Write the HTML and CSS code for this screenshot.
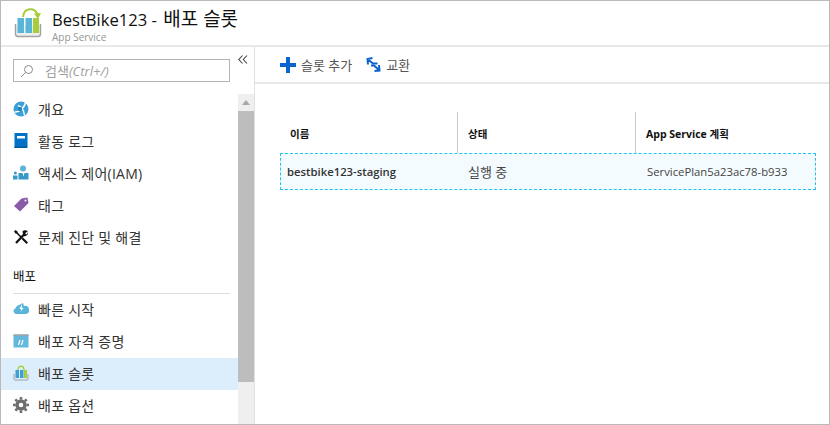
FILE: index.html
```html
<!DOCTYPE html>
<html lang="ko">
<head>
<meta charset="UTF-8" />
<title>BestBike123 - 배포 슬롯</title>
<link rel="stylesheet" href="styles.css">
</head>
<body>
<div class="window">
  <header class="blade-header">
    <svg class="header-icon" width="30" height="30" viewBox="0 0 30 30">
      <path d="M9 9 C10 -0.5 20 -1 23.5 6" fill="none" stroke="#a5ce39" stroke-width="2"/>
      <path d="M20 5.5 L27 5 L24 11 Z" fill="#a5ce39"/>
      <path d="M1.5 17 V26 Q1.5 28.5 4 28.5 H24 Q26.5 28.5 26.5 26 V17 Z" fill="#eeeeee"/>
      <path d="M1.5 16 V26 Q1.5 28.5 4 28.5 H24 Q26.5 28.5 26.5 26 V16" fill="none" stroke="#a0a1a2" stroke-width="1.4"/>
      <rect x="3.5" y="10" width="6.5" height="15" fill="#59b4d9"/>
      <rect x="11.5" y="10" width="6.5" height="15" fill="#59b4d9"/>
      <rect x="19" y="10" width="6" height="15" fill="#a5ce39"/>
    </svg>
    <div class="header-text">
      <h1>BestBike123 - <span class="ko">배포 슬롯</span></h1>
      <div class="subtitle">App Service</div>
    </div>
  </header>
  <div class="blade-body">
    <aside class="sidebar">
      <div class="search-row">
        <div class="search-box">
          <svg width="14" height="14" viewBox="0 0 14 14"><circle cx="8.5" cy="5.5" r="4" fill="none" stroke="#8a8a8a"/><path d="M5.5 8.5 L1 13" stroke="#8a8a8a"/></svg>
          <span>검색<i>(Ctrl+/)</i></span>
        </div>
        <svg class="collapse" width="10" height="9" viewBox="0 0 10 9"><path d="M4.5 0.5 L0.8 4.5 L4.5 8.5 M9 0.5 L5.3 4.5 L9 8.5" fill="none" stroke="#444" stroke-width="1.1"/></svg>
      </div>
      <div class="menu-wrap">
        <nav class="menu">
          <a class="menu-item">
            <svg width="16" height="16" viewBox="0 0 16 16"><circle cx="8" cy="8" r="7.5" fill="#3c9fd6"/><path d="M1.5 11 C6 11.5 11 7 12.5 2" fill="none" stroke="#fff" stroke-width="1.6"/><path d="M5 4.5 C8 5.5 11 9 11.5 14.5" fill="none" stroke="#fff" stroke-width="1.4"/><circle cx="7" cy="8" r="2.2" fill="#1f7fbf"/></svg>
            <span>개요</span>
          </a>
          <a class="menu-item">
            <svg width="16" height="16" viewBox="0 0 16 16"><rect x="1.5" y="0" width="13" height="15" fill="#0072c6"/><rect x="14" y="1" width="1" height="14" fill="#7fb8e3"/><rect x="4" y="3" width="8" height="2.5" fill="#fff"/><rect x="1.5" y="13.5" width="12.5" height="1.5" fill="#005a9e"/></svg>
            <span>활동 로그</span>
          </a>
          <a class="menu-item">
            <svg width="16" height="16" viewBox="0 0 16 16"><circle cx="10" cy="3.5" r="3" fill="#59b4d9"/><path d="M5.5 8 H15.5 V14.5 H5.5 Z" fill="#3999c6"/><path d="M9.5 8 L10.5 11.5 L11.5 8 Z" fill="#fff"/><circle cx="2.4" cy="8" r="1.5" fill="#3999c6"/><rect x="0" y="10.5" width="4.5" height="4" fill="#3999c6"/></svg>
            <span>액세스 제어(IAM)</span>
          </a>
          <a class="menu-item">
            <svg width="16" height="16" viewBox="0 0 16 16"><path d="M8.5 1.5 L14.5 0.5 L15.5 6 L7 14.5 L1 9 Z" fill="#8a5aa8"/><circle cx="12.5" cy="3.5" r="1" fill="#fff"/></svg>
            <span>태그</span>
          </a>
          <a class="menu-item">
            <svg width="16" height="16" viewBox="0 0 16 16"><path d="M3 14 L11 5.5" stroke="#111" stroke-width="2.2"/><path d="M9.5 2.5 A3.5 3.5 0 0 1 14.8 2.6 L12.4 4 L12.6 5 L13.6 5.4 L15 3.2 A3.5 3.5 0 0 1 10.5 7 Z" fill="#111"/><path d="M3 3 L9 9" stroke="#111" stroke-width="1.6"/><path d="M1 2.5 L2.5 1 L5 3 L3 5 Z" fill="#111"/><path d="M8.5 10 L10 8.5 L15 13.5 L13.5 15 Z" fill="#111"/></svg>
            <span>문제 진단 및 해결</span>
          </a>
          <div class="menu-group">배포</div>
          <a class="menu-item">
            <svg width="16" height="16" viewBox="0 0 16 16"><path d="M3 13 A3 3 0 0 1 2.6 7.2 A4.5 4.5 0 0 1 6 4 L10 2 L11 5 A4 4 0 0 1 13 13 Z" fill="#59b4d9"/><path d="M9 3 L6.5 8 H8.5 L7.5 11 L10.5 7 H8.8 Z" fill="#fff"/></svg>
            <span>빠른 시작</span>
          </a>
          <a class="menu-item">
            <svg width="16" height="16" viewBox="0 0 16 16"><rect x="0.5" y="1.5" width="15" height="13" fill="#63b8de"/><rect x="0.5" y="1.5" width="15" height="1.6" fill="#9aa5aa"/><path d="M7 7 L5.5 12 M10 7 L8.5 12" stroke="#fff" stroke-width="1.2"/></svg>
            <span>배포 자격 증명</span>
          </a>
          <a class="menu-item selected">
            <svg width="16" height="16" viewBox="0 0 16 16"><path d="M5 5 C5 0 11 0 11 5" fill="none" stroke="#a5ce39" stroke-width="1.3"/><rect x="2.5" y="5" width="3.5" height="8" fill="#3f9fd0"/><rect x="7" y="5" width="3.5" height="8" fill="#3f9fd0"/><rect x="11" y="5" width="3" height="8" fill="#a5ce39"/><path d="M1 9 V14 Q1 15 2 15 H14 Q15 15 15 14 V9" fill="none" stroke="#a0a1a2"/></svg>
            <span>배포 슬롯</span>
          </a>
          <a class="menu-item">
            <svg width="16" height="16" viewBox="0 0 16 16"><circle cx="8" cy="8" r="4" fill="none" stroke="#6e6e6e" stroke-width="3.4"/><path d="M8 0 V16 M0 8 H16 M2.3 2.3 L13.7 13.7 M13.7 2.3 L2.3 13.7" stroke="#6e6e6e" stroke-width="2.6" stroke-dasharray="2.6 10.8"/></svg>
            <span>배포 옵션</span>
          </a>
        </nav>
        <div class="scrollbar">
          <div class="scroll-up"></div>
          <div class="scroll-thumb"></div>
        </div>
      </div>
    </aside>
    <main class="content">
      <div class="toolbar">
        <button class="tool">
          <svg width="16" height="16" viewBox="0 0 16 16"><path d="M6 0 H10 V6 H16 V10 H10 V16 H6 V10 H0 V6 H6 Z" fill="#0b63ce"/></svg>
          <span>슬롯 추가</span>
        </button>
        <button class="tool">
          <svg width="15" height="15" viewBox="0 0 15 15"><path d="M6.5 1 L1.5 2 L2 7.5 M2 2.5 L7 6.5 L11.5 6.5" fill="none" stroke="#0b63ce" stroke-width="2"/><path d="M8.5 14 L13.5 13.5 L13 8 M13 13 L8 8.5 L5 8.5" fill="none" stroke="#0b63ce" stroke-width="2"/></svg>
          <span>교환</span>
        </button>
      </div>
      <div class="grid">
        <div class="grid-head">
          <div class="col col-name">이름</div>
          <div class="col col-state">상태</div>
          <div class="col col-plan">App Service 계획</div>
        </div>
        <div class="grid-row">
          <div class="cell col-name strong">bestbike123-staging</div>
          <div class="cell col-state">실행 중</div>
          <div class="cell col-plan">ServicePlan5a23ac78-b933</div>
        </div>
      </div>
    </main>
  </div>
</div>
</body>
</html>
```
FILE: styles.css
```css
html, body {
  margin: 0;
  padding: 0;
}
body {
  width: 830px;
  height: 425px;
  overflow: hidden;
  background: #fff;
  font-family: "Open Sans", "Noto Sans CJK KR", sans-serif;
  color: #333;
}
.window {
  height: 425px;
  box-sizing: border-box;
  border: 1px solid #b9b9b9;
  display: flex;
  flex-direction: column;
}
.blade-header {
  height: 44px;
  flex: none;
  display: flex;
  align-items: center;
  gap: 8px;
  padding-left: 13px;
  border-bottom: 2px solid #e8e8e8;
}
.header-icon {
  flex: none;
}
.header-text {
  padding-top: 4px;
}
h1 {
  margin: 0;
  font-size: 16.6px;
  line-height: 22px;
  font-weight: 400;
  color: #111;
}
.ko {
  font-size: 19px;
  line-height: 22px;
  margin-left: 2px;
}
.subtitle {
  font-size: 10px;
  line-height: 12px;
  color: #969696;
}
.blade-body {
  flex: 1;
  display: flex;
  min-height: 0;
}
.sidebar {
  width: 254px;
  flex: none;
  box-sizing: border-box;
  border-right: 1px solid #e0e0e0;
  display: flex;
  flex-direction: column;
  overflow: hidden;
}
.search-row {
  height: 47px;
  flex: none;
  display: flex;
  padding: 12px 0 0 12px;
  box-sizing: border-box;
  gap: 8px;
}
.search-box {
  width: 217px;
  height: 23px;
  box-sizing: border-box;
  border: 1px solid #b4b4b4;
  display: flex;
  align-items: center;
  gap: 11px;
  padding-left: 6px;
  font-size: 13px;
  color: #a0a0a0;
}
.collapse {
  flex: none;
  margin-top: -4px;
}
.menu-wrap {
  flex: 1;
  display: flex;
  min-height: 0;
}
.menu {
  flex: 1;
}
.menu-item {
  height: 32px;
  box-sizing: border-box;
  padding: 0 0 2px 12px;
  display: flex;
  align-items: center;
  gap: 9px;
  font-size: 14px;
  letter-spacing: 0.25px;
  color: #333;
}
.menu-item.selected {
  background: #dcedfc;
}
.menu-group {
  margin: 0 8px 0 12px;
  height: 40px;
  box-sizing: border-box;
  padding-top: 15px;
  font-size: 12.5px;
  line-height: 16px;
  color: #111;
  border-bottom: 1px solid #ddd;
}
.scrollbar {
  width: 16px;
  flex: none;
  background: #efefef;
}
.scroll-up {
  height: 17px;
  position: relative;
}
.scroll-up::after {
  content: "";
  position: absolute;
  left: 4px;
  top: 6px;
  border: 4px solid transparent;
  border-top: 0;
  border-bottom: 5px solid #a8a8a8;
}
.scroll-thumb {
  height: 271px;
  background: #bdbdbd;
}
.content {
  flex: 1;
  min-width: 0;
}
.toolbar {
  height: 35px;
  border-bottom: 2px solid #e8e8e8;
  display: flex;
  align-items: center;
  gap: 14px;
  padding-left: 25px;
}
.tool {
  background: none;
  border: 0;
  padding: 0;
  display: flex;
  align-items: center;
  gap: 5px;
  font: inherit;
  font-size: 13px;
  color: #555;
}
.grid {
  margin: 28px 13px 0 25px;
}
.grid-head {
  display: flex;
  height: 41px;
}
.col {
  border-right: 1px solid #c8c8c8;
  font-size: 10.5px;
  font-weight: 700;
  color: #111;
  padding: 14px 0 0 10px;
  box-sizing: border-box;
}
.col-name {
  width: 178px;
  flex: none;
}
.col-state {
  width: 178px;
  flex: none;
}
.col-plan {
  flex: 1;
  border-right: 0;
}
.grid-row {
  display: flex;
  height: 37px;
  align-items: center;
  border: 1px dashed #1fc4f0;
  box-sizing: border-box;
  background: #f4fbfe;
}
.cell {
  font-size: 11.3px;
  color: #444;
  padding-left: 6px;
  box-sizing: border-box;
}
.cell.col-state {
  padding-left: 9px;
  font-size: 13px;
}
.cell.col-plan {
  padding-left: 10px;
}
.cell.strong {
  font-weight: 600;
  color: #333;
}
```
